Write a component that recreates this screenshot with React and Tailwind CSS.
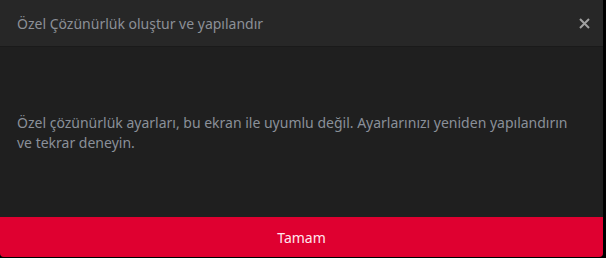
const App = () => {
  return (
    <div className="w-[606px] h-[258px] bg-black" style={{ fontFamily: '"Noto Sans", sans-serif' }}>
      <div className="w-[603px] h-[257px] flex flex-col bg-[#1f1f1f] rounded-b-[4px] overflow-hidden">
        {/* Header */}
        <div className="h-[47px] flex items-center justify-between pl-[17px] pr-[12px] pt-[1px] bg-[#272727] border-b border-[#1a1a1a]">
          <h1 className="text-[14px] text-[#8c9097]">Özel Çözünürlük oluştur ve yapılandır</h1>
          <button className="w-[14px] h-[14px] flex items-center justify-center text-[#a0a0a0]">
            <svg width="11" height="11" viewBox="0 0 11 11">
              <path d="M1 1 L10 10 M10 1 L1 10" stroke="currentColor" strokeWidth="2" />
            </svg>
          </button>
        </div>

        {/* Body */}
        <div className="flex-1 flex items-center px-[17px] pt-[2px]">
          <p className="text-[14px] leading-[20px] text-[#8a9099]">
            Özel çözünürlük ayarları, bu ekran ile uyumlu değil. Ayarlarınızı yeniden yapılandırın ve tekrar deneyin.
          </p>
        </div>

        {/* Footer */}
        <button className="h-[40px] w-full bg-[#df0030] text-[14px] text-[#ffe6ee]">Tamam</button>
      </div>
    </div>
  );
};

export default App;
